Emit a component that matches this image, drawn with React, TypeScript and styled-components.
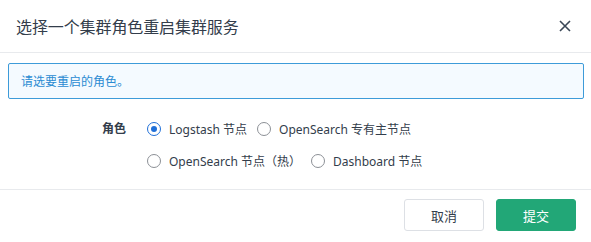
import React, { useState } from "react";
import styled, { createGlobalStyle } from "styled-components";

const Global = createGlobalStyle`
  html, body { margin: 0; padding: 0; background: #fff; }
  body { font-family: "Noto Sans", "Noto Sans CJK SC", sans-serif; }
  * { box-sizing: border-box; }
`;

const Dialog = styled.div`
  width: 591px;
  height: 242px;
  background: #fff;
  display: flex;
  flex-direction: column;
`;

const Header = styled.div`
  height: 53px;
  display: flex;
  align-items: center;
  justify-content: space-between;
  padding: 0 16px 0 16px;
  border-bottom: 1px solid #e8eaed;
`;

const Title = styled.h2`
  margin: 0;
  font-size: 16px;
  font-weight: 400;
  color: #333d4b;
  letter-spacing: -0.1px;
`;

const Close = styled.button`
  border: 0;
  background: none;
  padding: 0;
  width: 16px;
  height: 16px;
  display: flex;
  align-items: center;
  justify-content: center;
  cursor: pointer;
  margin-right: 2px;
`;

const Body = styled.div`
  padding: 10px 7px 0 8px;
  border-bottom: 1px solid #e8eaed;
  height: 137px;
`;

const Alert = styled.div`
  height: 36px;
  border: 1px solid #3d9bd9;
  border-radius: 2px;
  background: #f4faff;
  color: #2b8bd2;
  font-size: 12px;
  display: flex;
  align-items: center;
  padding-left: 12px;
`;

const FormRow = styled.div`
  display: flex;
  align-items: flex-start;
  margin-top: 19px;
`;

const Label = styled.div`
  width: 139px;
  text-align: right;
  font-size: 12px;
  font-weight: 700;
  color: #333d4b;
  line-height: 22px;
  padding-right: 21px;
`;

const RadioGroup = styled.div`
  display: flex;
  flex-wrap: wrap;
  max-width: 300px;
  row-gap: 10px;
`;

const Item = styled.label`
  display: flex;
  align-items: center;
  height: 22px;
  margin-right: 10px;
  font-size: 12px;
  color: #333d4b;
  cursor: pointer;
`;

const Dot = styled.span<{ $on: boolean }>`
  width: 14px;
  height: 14px;
  border-radius: 50%;
  border: 1.5px solid ${(p) => (p.$on ? "#1f6fd8" : "#8c9096")};
  display: flex;
  align-items: center;
  justify-content: center;
  margin-right: 8px;
  flex-shrink: 0;
  &::after {
    content: "";
    width: 6px;
    height: 6px;
    border-radius: 50%;
    background: #1f6fd8;
    display: ${(p) => (p.$on ? "block" : "none")};
  }
`;

const Footer = styled.div`
  flex: 1;
  display: flex;
  justify-content: flex-end;
  align-items: center;
  gap: 12px;
  padding: 0 15px 2px 0;
`;

const Button = styled.button<{ $primary?: boolean }>`
  width: 80px;
  height: 32px;
  border-radius: 3px;
  font-size: 13px;
  font-family: inherit;
  cursor: pointer;
  border: 1px solid ${(p) => (p.$primary ? "#22a777" : "#dde0e5")};
  background: ${(p) => (p.$primary ? "#22a777" : "#fff")};
  color: ${(p) => (p.$primary ? "#fff" : "#333d4b")};
`;

const roles = ["Logstash 节点", "OpenSearch 专有主节点", "OpenSearch 节点（热）", "Dashboard 节点"];

export default function App() {
  const [sel, setSel] = useState(0);
  return (
    <>
      <Global />
      <Dialog>
        <Header>
          <Title>选择一个集群角色重启集群服务</Title>
          <Close aria-label="close">
            <svg width="12" height="12" viewBox="0 0 12 12">
              <path d="M1 1L11 11M11 1L1 11" stroke="#3a4757" strokeWidth="1.6" />
            </svg>
          </Close>
        </Header>
        <Body>
          <Alert>请选要重启的角色。</Alert>
          <FormRow>
            <Label>角色</Label>
            <RadioGroup>
              {roles.map((r, i) => (
                <Item key={r} onClick={() => setSel(i)}>
                  <Dot $on={sel === i} />
                  {r}
                </Item>
              ))}
            </RadioGroup>
          </FormRow>
        </Body>
        <Footer>
          <Button>取消</Button>
          <Button $primary>提交</Button>
        </Footer>
      </Dialog>
    </>
  );
}
